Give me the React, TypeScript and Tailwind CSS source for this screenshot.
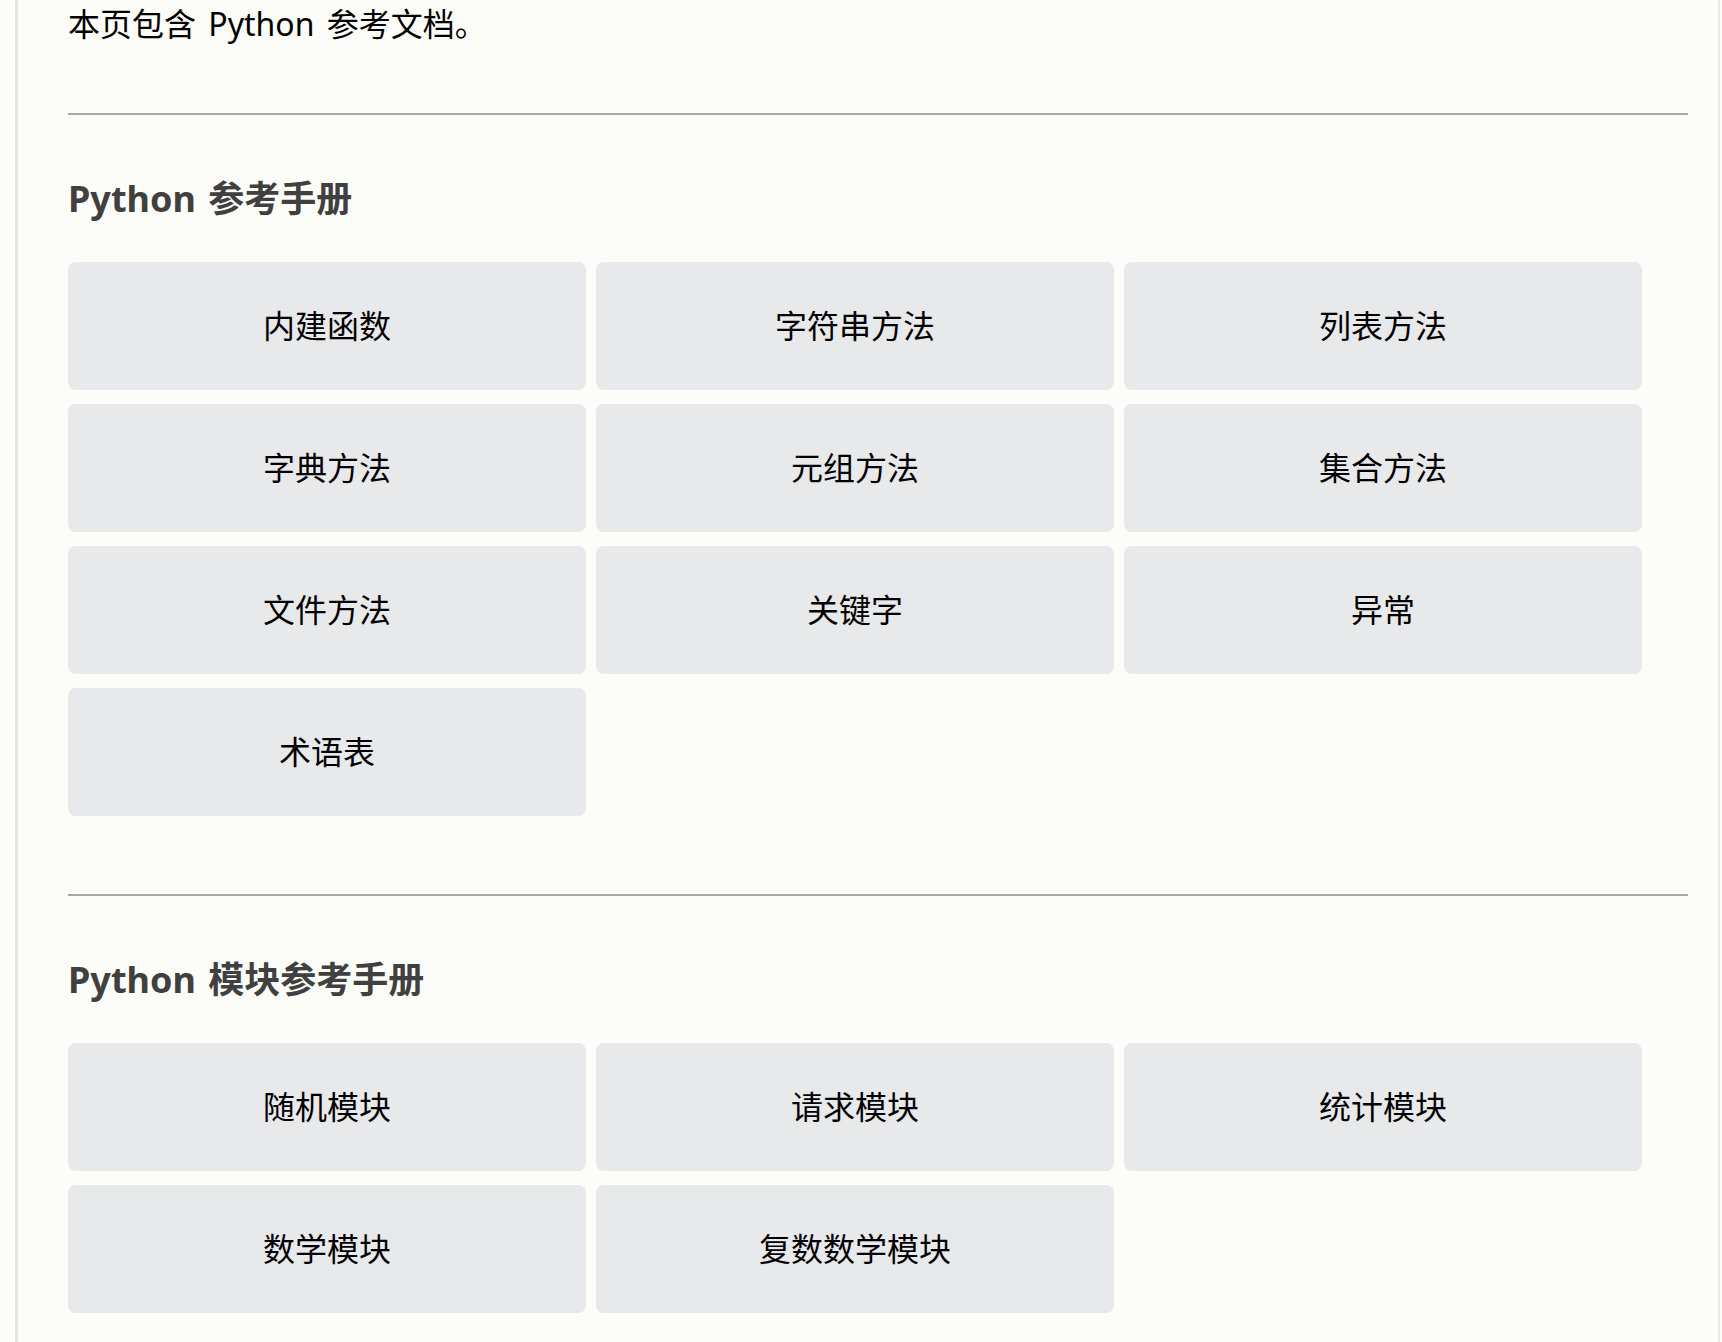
const builtins = [
  "内建函数",
  "字符串方法",
  "列表方法",
  "字典方法",
  "元组方法",
  "集合方法",
  "文件方法",
  "关键字",
  "异常",
  "术语表",
];

const modules = ["随机模块", "请求模块", "统计模块", "数学模块", "复数数学模块"];

function LinkGrid({ items }: { items: string[] }) {
  return (
    <div className="mt-[36px] grid grid-cols-[repeat(3,518px)] gap-x-[10px] gap-y-[14px]">
      {items.map((label) => (
        <a
          key={label}
          href="#"
          className="flex h-[128px] items-center justify-center rounded-[8px] bg-[#e8e9eb] text-[32px] leading-[48px] text-black hover:bg-[#dcdde0]"
        >
          {label}
        </a>
      ))}
    </div>
  );
}

export default function App() {
  return (
    <div className="flex min-h-screen bg-[#fcfcf8] font-['Noto_Sans','Noto_Sans_CJK_SC',sans-serif]">
      <div className="ml-[15px] w-[3px] shrink-0 bg-[#e6e6e1]" />
      <main className="flex-1 pb-10 pl-[50px]">
        <div className="w-[1620px]">
          <p className="text-[32px] leading-[48px] text-black [word-spacing:4px]">
            本页包含 Python 参考文档。
          </p>

          <hr className="mt-[65px] border-t-2 border-[#a9a9a9]" />
          <h2 className="mt-[57px] text-[36px] font-bold leading-[54px] text-[#404040] [word-spacing:3px]">
            Python 参考手册
          </h2>
          <LinkGrid items={builtins} />

          <hr className="mt-[78px] border-t-2 border-[#a9a9a9]" />
          <h2 className="mt-[57px] text-[36px] font-bold leading-[54px] text-[#404040] [word-spacing:3px]">
            Python 模块参考手册
          </h2>
          <LinkGrid items={modules} />
        </div>
      </main>
      <div className="mr-[2px] w-[2px] shrink-0 bg-[#ebebe6]" />
    </div>
  );
}
